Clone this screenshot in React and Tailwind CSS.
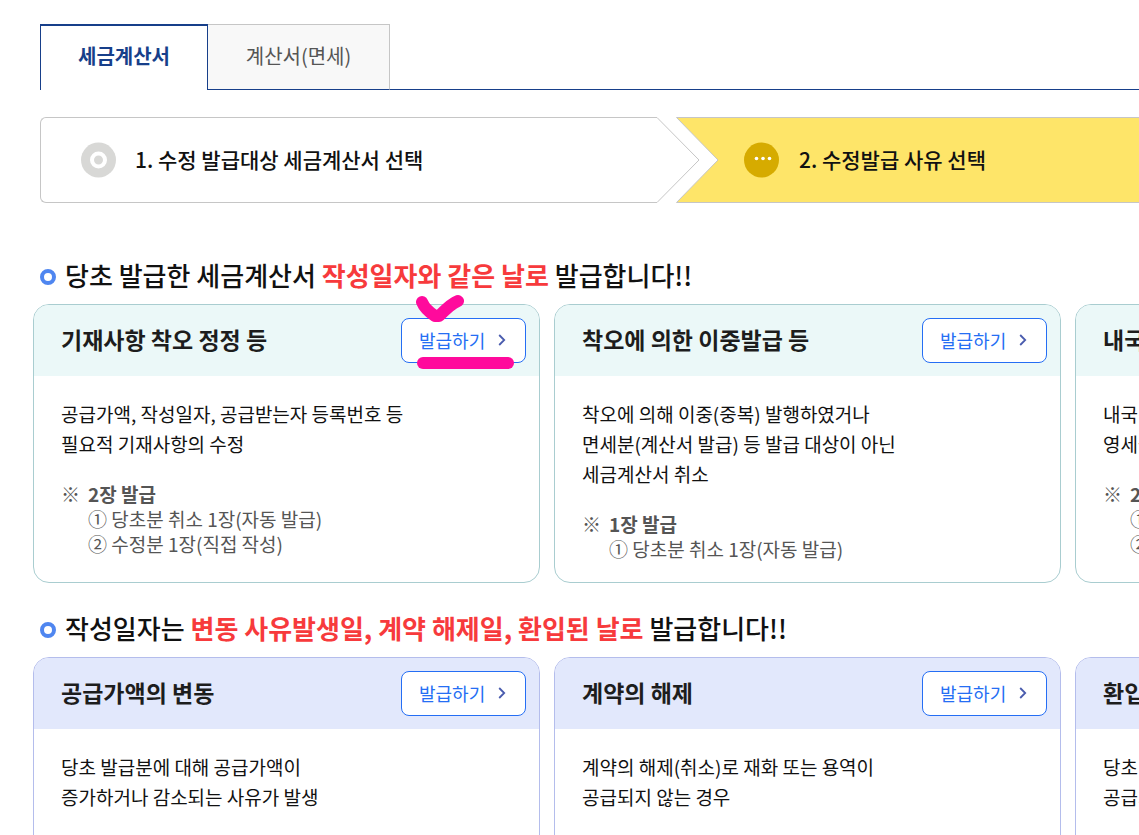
const teal = { border: 'border-[#a9cdd0]', header: 'bg-[#ebf8f8]' };
const indigo = { border: 'border-[#b4bdec]', header: 'bg-[#e2e8fc]' };

const sameDayCards = [
  {
    title: '기재사항 착오 정정 등',
    lines: ['공급가액, 작성일자, 공급받는자 등록번호 등', '필요적 기재사항의 수정'],
    note: '2장 발급',
    items: ['① 당초분 취소 1장(자동 발급)', '② 수정분 1장(직접 작성)'],
    marked: true,
  },
  {
    title: '착오에 의한 이중발급 등',
    lines: ['착오에 의해 이중(중복) 발행하였거나', '면세분(계산서 발급) 등 발급 대상이 아닌', '세금계산서 취소'],
    note: '1장 발급',
    items: ['① 당초분 취소 1장(자동 발급)'],
  },
  {
    title: '내국신용장 사후개설',
    lines: ['내국신용장 등의 사후 발급으로', '영세율 적용'],
    note: '2장 발급',
    items: ['① 당초분 취소 1장(자동 발급)', '② 수정분 1장(직접 작성)'],
  },
];

const changedDayCards = [
  {
    title: '공급가액의 변동',
    lines: ['당초 발급분에 대해 공급가액이', '증가하거나 감소되는 사유가 발생'],
    note: '1장 발급',
    items: ['① 변동분 1장(직접 작성)'],
  },
  {
    title: '계약의 해제',
    lines: ['계약의 해제(취소)로 재화 또는 용역이', '공급되지 않는 경우'],
    note: '1장 발급',
    items: ['① 취소분 1장(자동 발급)'],
  },
  {
    title: '환입',
    lines: ['당초 공급한 재화가 환입된 경우', '공급가액 수정'],
    note: '1장 발급',
    items: ['① 환입분 1장(직접 작성)'],
  },
];

function Tabs() {
  return (
    <div className="ml-10 flex h-[66px]" role="tablist">
      <button
        type="button"
        role="tab"
        aria-selected="true"
        className="w-[168px] border-x border-t-2 border-[#173f8a] pb-1 text-xl font-bold text-[#173f8a]"
      >
        세금계산서
      </button>
      <button
        type="button"
        role="tab"
        aria-selected="false"
        className="w-[182px] border-t border-r border-b border-[#c6c6c6] border-b-[#173f8a] bg-[#f8f8f8] pb-0.5 text-xl text-[#555555]"
      >
        계산서(면세)
      </button>
      <div className="flex-1 border-b border-[#173f8a]" />
    </div>
  );
}

function Steps() {
  return (
    <ol className="mt-[27px] ml-10 flex h-[86px] text-[21px] text-[#111111]">
      <li className="flex w-[617px] shrink-0 items-center gap-[19px] rounded-l-md border-y border-l border-[#c6c6c6] pl-10 font-medium">
        <svg width="35" height="36" viewBox="0 0 35 36" aria-hidden="true">
          <circle cx="17.5" cy="18" r="17.5" fill="#d8d8d6" />
          <circle cx="17.5" cy="18" r="6.5" fill="#d8d8d6" stroke="#fff" strokeWidth="4" />
        </svg>
        1. 수정 발급대상 세금계산서 선택
      </li>
      <li className="flex min-w-0 flex-1 font-medium">
        {/* Arrow between the two steps */}
        <svg width="62" height="86" viewBox="0 0 62 86" className="shrink-0" aria-hidden="true">
          <path d="M0 .5 42 43 0 85.5" fill="none" stroke="#c6c6c6" />
          <path d="M62 .5H19.5L61 43 19.5 85.5H62Z" fill="#fee569" />
          <path d="M62 .5H19.5L61 43 19.5 85.5H62" fill="none" stroke="#c6c6c6" />
        </svg>
        <div className="flex flex-1 items-center gap-5 border-y border-[#c6c6c6] bg-[#fee569] pl-[25px] whitespace-nowrap">
          <svg width="35" height="36" viewBox="0 0 35 36" className="shrink-0" aria-hidden="true">
            <circle cx="17.5" cy="18" r="17.5" fill="#d6ab00" />
            <g fill="#fff">
              <circle cx="12.5" cy="16.5" r="1.8" />
              <circle cx="19" cy="16.5" r="1.8" />
              <circle cx="25.5" cy="16.5" r="1.8" />
            </g>
          </svg>
          2. 수정발급 사유 선택
        </div>
      </li>
    </ol>
  );
}

function SectionTitle({ before, accent, after }) {
  return (
    <h2 className="ml-10 flex h-10 items-center gap-[9px] text-[26px] font-medium whitespace-pre text-[#111111]">
      <span className="size-4 shrink-0 rounded-full border-4 border-[#4f86f0]" />
      <span className="pb-[5px]">
        {before} <strong className="font-bold text-[#f73a3c]">{accent}</strong> {after}
      </span>
    </h2>
  );
}

/* Hand-drawn check and underline around the issue button */
function Marker() {
  return (
    <svg
      width="100"
      height="78"
      viewBox="0 0 100 78"
      className="pointer-events-none absolute -top-[11px] right-6"
      fill="none"
      stroke="#ff0a9c"
      strokeWidth="12"
      strokeLinecap="round"
      strokeLinejoin="round"
      aria-hidden="true"
    >
      <path d="M7 8C9 13 14 18 20 22L24 22C30 16 37 9 43 7" />
      <path d="M8 69H93" />
    </svg>
  );
}

function ReasonCard({ card, theme }) {
  return (
    <article className={`relative w-[507px] shrink-0 rounded-2xl border bg-white ${theme.border}`}>
      <header className={`flex h-[71px] items-center justify-between rounded-t-[15px] pr-[13px] pl-[27px] ${theme.header}`}>
        <h3 className="pb-0.5 text-[23px] font-bold text-[#1d1d1d]">{card.title}</h3>
        <button
          type="button"
          className="flex h-[45px] w-[125px] items-center rounded-lg border border-[#256ef4] bg-white pb-0.5 pl-[17px] text-lg text-[#256ef4]"
        >
          발급하기
          <svg width="8" height="12" viewBox="0 0 8 12" className="ml-[13px]" aria-hidden="true">
            <path d="M1.2 1 6.2 6 1.2 11" fill="none" stroke="#4a5cae" strokeWidth="1.8" />
          </svg>
        </button>
      </header>
      {card.marked && <Marker />}
      <div className="px-[27px] pt-[23px] pb-[21px]">
        <p className="text-[19px] leading-[30px] text-[#111111]">
          {card.lines.map((line) => (
            <span key={line} className="block">{line}</span>
          ))}
        </p>
        <div className="mt-[22px] flex text-[19px] leading-[25px] text-[#555555]">
          <span className="w-[27px] shrink-0 font-bold">※</span>
          <div>
            <strong className="block font-bold">{card.note}</strong>
            <ul>
              {card.items.map((item) => (
                <li key={item}>{item}</li>
              ))}
            </ul>
          </div>
        </div>
      </div>
    </article>
  );
}

function CardRow({ cards, theme }) {
  return (
    <div className="mt-[7px] ml-[33px] flex gap-[14px]">
      {cards.map((card) => (
        <ReasonCard key={card.title} card={card} theme={theme} />
      ))}
    </div>
  );
}

export default function App() {
  return (
    <main className="h-screen overflow-hidden bg-white pt-6 font-['Noto_Sans_CJK_KR',sans-serif] break-keep">
      <Tabs />
      <Steps />
      <section className="mt-[54px]">
        <SectionTitle before="당초 발급한 세금계산서" accent="작성일자와 같은 날로" after="발급합니다!!" />
        <CardRow cards={sameDayCards} theme={teal} />
      </section>
      <section className="mt-[27px]">
        <SectionTitle before="작성일자는" accent="변동 사유발생일, 계약 해제일, 환입된 날로" after="발급합니다!!" />
        <CardRow cards={changedDayCards} theme={indigo} />
      </section>
    </main>
  );
}
